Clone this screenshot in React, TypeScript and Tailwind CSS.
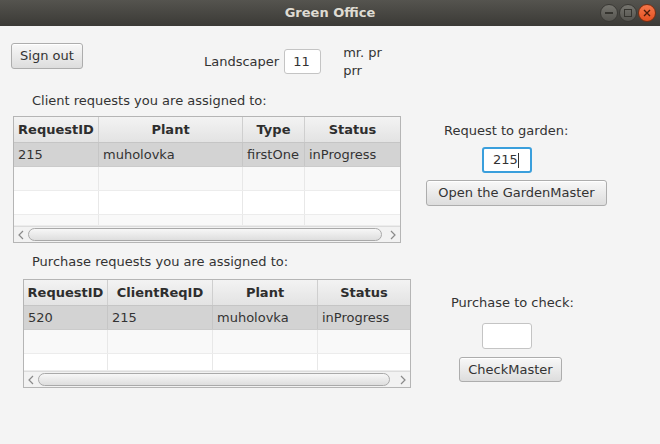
import React from "react";

const font = "font-['DejaVu_Sans',sans-serif]";

type TableProps = {
  widths: string[];
  headers: string[];
  row: string[];
  fillers: string[];
  thumb: string;
};

const Chevron = ({ dir }: { dir: "left" | "right" }) => (
  <svg width="6" height="10" viewBox="0 0 6 10" className="shrink-0">
    <polyline
      points={dir === "left" ? "5,1 1,5 5,9" : "1,1 5,5 1,9"}
      fill="none"
      stroke="#8a8a8a"
      strokeWidth="1.2"
    />
  </svg>
);

const Table = ({ widths, headers, row, fillers, thumb }: TableProps) => {
  return (
    <div className="border border-[#b5b5b5] bg-white w-[388px]">
      <div className="flex h-[26px] border-b border-[#c5c5c5] bg-gradient-to-b from-[#f3f3f3] to-[#e3e3e3]">
        {headers.map((h, i) => (
          <div
            key={h}
            className={`${widths[i]} flex items-center justify-center font-bold text-[#2e2e2e] ${
              i < headers.length - 1 ? "border-r border-[#cfcfcf]" : ""
            }`}
          >
            {h}
          </div>
        ))}
      </div>
      <div className="flex h-[24px] bg-[#d3d3d3] border-b border-[#cbcbcb]">
        {row.map((c, i) => (
          <div
            key={i}
            className={`${widths[i]} flex items-center pl-[4px] text-[#333] ${
              i < row.length - 1 ? "border-r border-[#c6c6c6]" : ""
            }`}
          >
            {c}
          </div>
        ))}
      </div>
      {fillers.map((f, r) => (
        <div
          key={r}
          className={`flex ${f} ${r % 2 === 0 ? "bg-[#f9f9f9]" : "bg-white"} border-b border-[#ececec]`}
        >
          {widths.map((w, i) => (
            <div
              key={i}
              className={`${w} ${i < widths.length - 1 ? "border-r border-[#e8e8e8]" : ""}`}
            />
          ))}
        </div>
      ))}
      <div className="flex items-center h-[16px] bg-[#f2f2f2] border-t border-[#dcdcdc] px-[4px] gap-[4px]">
        <Chevron dir="left" />
        <div className={`${thumb} h-[13px] rounded-full border border-[#a9a9a9] bg-gradient-to-b from-[#f7f7f7] to-[#dedede]`} />
        <div className="flex-1" />
        <Chevron dir="right" />
      </div>
    </div>
  );
};

const Button = ({ label, className }: { label: string; className: string }) => (
  <button
    className={`${className} flex items-center justify-center rounded-[3px] border border-[#adadad] bg-gradient-to-b from-[#f8f8f8] to-[#dddddd] text-[#333] shadow-[inset_0_1px_0_#ffffff]`}
  >
    {label}
  </button>
);

const WinButton = ({ kind }: { kind: "min" | "max" | "close" }) => (
  <div
    className={`w-[18px] h-[18px] rounded-full flex items-center justify-center border ${
      kind === "close"
        ? "border-[#7a2e12] bg-gradient-to-b from-[#f5774a] to-[#e2501f]"
        : "border-[#3a3935] bg-gradient-to-b from-[#76756f] to-[#55544f]"
    }`}
  >
    {kind === "min" && <div className="w-[8px] h-[2px] bg-[#35342f]" />}
    {kind === "max" && <div className="w-[8px] h-[8px] border-[1.5px] border-[#35342f]" />}
    {kind === "close" && (
      <svg width="8" height="8" viewBox="0 0 8 8">
        <path d="M1 1 L7 7 M7 1 L1 7" stroke="#4a1c0b" strokeWidth="1.4" />
      </svg>
    )}
  </div>
);

const App = () => {
  return (
    <div className={`w-[660px] h-[444px] overflow-hidden bg-[#f4f4f4] text-[13px] leading-[18px] text-[#333] ${font}`}>
      <div className="relative flex items-center justify-center h-[26px] bg-gradient-to-b from-[#55544f] to-[#3b3a36]">
        <span className="font-bold text-[13px] text-[#dfdbd2]">Green Office</span>
        <div className="absolute right-[4px] top-[4px] flex gap-[1px]">
          <WinButton kind="min" />
          <WinButton kind="max" />
          <WinButton kind="close" />
        </div>
      </div>

      <div className="flex items-start h-[60px]">
        <Button label="Sign out" className="mt-[17px] ml-[11px] w-[72px] h-[26px]" />
        <div className="flex items-center mt-[23px] ml-[121px]">
          <span>Landscaper</span>
          <div className="ml-[5px] w-[37px] h-[25px] rounded-[3px] border border-[#c4c4c4] bg-white flex items-center pl-[8px]">
            11
          </div>
        </div>
        <div className="mt-[18px] ml-[22px] flex flex-col">
          <span>mr. pr</span>
          <span>prr</span>
        </div>
      </div>

      <div className="flex items-start h-[157px]">
        <div className="w-[401px] flex flex-col">
          <span className="mt-[6px] ml-[32px]">Client requests you are assigned to:</span>
          <div className="mt-[6px] ml-[13px]">
            <Table
              widths={["w-[85px]", "w-[144px]", "w-[62px]", "w-[95px]"]}
              headers={["RequestID", "Plant", "Type", "Status"]}
              row={["215", "muholovka", "firstOne", "inProgress"]}
              fillers={["h-[24px]", "h-[24px]", "h-[11px]"]}
              thumb="w-[357px]"
            />
          </div>
        </div>
        <div className="flex flex-col items-start">
          <span className="mt-[36px] ml-[43px]">Request to garden:</span>
          <div className="mt-[7px] ml-[81px] w-[50px] h-[26px] rounded-[3px] border-2 border-[#3a9fdc] bg-white flex items-center pl-[9px]">
            215<span className="w-[1px] h-[15px] bg-[#333]" />
          </div>
          <Button label="Open the GardenMaster" className="mt-[7px] ml-[25px] w-[181px] h-[26px]" />
        </div>
      </div>

      <div className="flex items-start">
        <div className="w-[411px] flex flex-col">
          <span className="mt-[10px] ml-[32px]">Purchase requests you are assigned to:</span>
          <div className="mt-[8px] ml-[23px]">
            <Table
              widths={["w-[84px]", "w-[105px]", "w-[105px]", "w-[92px]"]}
              headers={["RequestID", "ClientReqID", "Plant", "Status"]}
              row={["520", "215", "muholovka", "inProgress"]}
              fillers={["h-[24px]", "h-[17px]"]}
              thumb="w-[352px]"
            />
          </div>
        </div>
        <div className="flex flex-col items-start">
          <span className="mt-[51px] ml-[40px]">Purchase to check:</span>
          <div className="mt-[11px] ml-[71px] w-[50px] h-[26px] rounded-[3px] border border-[#c4c4c4] bg-white" />
          <Button label="CheckMaster" className="mt-[8px] ml-[48px] w-[103px] h-[25px]" />
        </div>
      </div>
    </div>
  );
};

export default App;
